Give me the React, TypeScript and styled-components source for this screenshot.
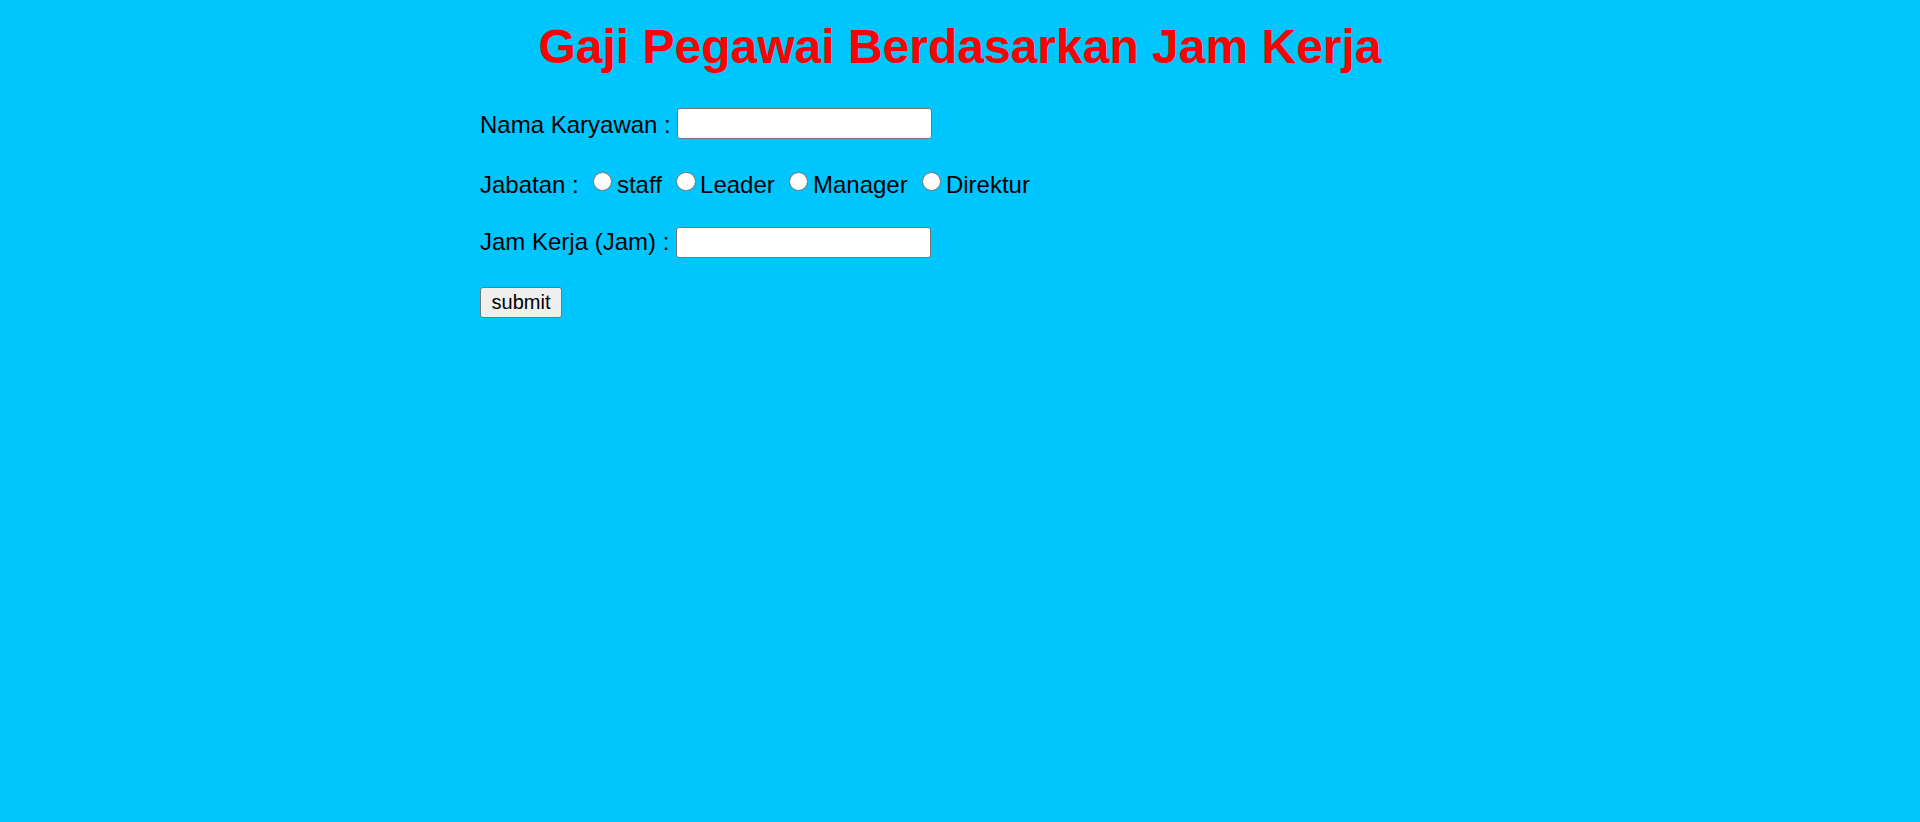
import React from "react";
import styled, { createGlobalStyle } from "styled-components";

const GlobalStyle = createGlobalStyle`
  html, body {
    margin: 0;
    padding: 0;
    background: #00c6ff;
  }
  body {
    font-family: "Liberation Sans", Arial, sans-serif;
    color: #000;
    min-height: 822px;
  }
`;

const Page = styled.div`
  min-height: 822px;
  background: #00c6ff;
  padding-top: 19px;
  box-sizing: border-box;
`;

const Title = styled.h1`
  margin: 0;
  font-family: "Liberation Sans", Arial, sans-serif;
  font-size: 48px;
  font-weight: bold;
  line-height: 55px;
  text-align: center;
  color: #ff0000;
`;

const Form = styled.form`
  width: 960px;
  margin: 0 auto;
  padding-top: 34px;
  display: flex;
  flex-direction: column;
  font-size: 24px;
`;

const Row = styled.div<{ $space: number }>`
  display: flex;
  align-items: flex-start;
  gap: 6.7px;
  margin-top: ${(p) => p.$space}px;
`;

const Label = styled.span<{ $offset?: number }>`
  line-height: normal;
  white-space: pre;
  margin-top: ${(p) => p.$offset ?? 0}px;
`;

const TextInput = styled.input`
  box-sizing: border-box;
  width: 255px;
  height: 31px;
  margin: 0;
  padding: 1.5px 3px;
  border: 1.5px solid #767676;
  border-radius: 3px;
  background: #fff;
  font-family: "Liberation Sans", Arial, sans-serif;
  font-size: 20px;
  outline: none;
`;

const Option = styled.label`
  display: flex;
  align-items: flex-start;
  line-height: normal;
`;

const Radio = styled.input`
  appearance: none;
  -webkit-appearance: none;
  box-sizing: border-box;
  width: 19.5px;
  height: 19.5px;
  margin: 1px 4.5px 0 7.5px;
  border: 1.5px solid #767676;
  border-radius: 50%;
  background: #fff;
  flex: none;
`;

const SubmitButton = styled.button`
  align-self: flex-start;
  box-sizing: border-box;
  width: 82px;
  height: 31px;
  margin: 29px 0 0;
  padding: 0 9px;
  border: 1.5px solid #767676;
  border-radius: 3px;
  background: #efefef;
  color: #000;
  font-family: "Liberation Sans", Arial, sans-serif;
  font-size: 20px;
  line-height: 1;
`;

const jabatan = ["staff", "Leader", "Manager", "Direktur"];

export default function App() {
  return (
    <>
      <GlobalStyle />
      <Page>
        <Title>Gaji Pegawai Berdasarkan Jam Kerja</Title>
        <Form onSubmit={(e) => e.preventDefault()}>
          <Row $space={0}>
            <Label $offset={2.5}>Nama Karyawan :</Label>
            <TextInput type="text" name="nama" />
          </Row>
          <Row $space={31.5}>
            <Label>Jabatan :</Label>
            {jabatan.map((j) => (
              <Option key={j}>
                <Radio type="radio" name="jabatan" value={j} />
                <span>{j}</span>
              </Option>
            ))}
          </Row>
          <Row $space={28}>
            <Label $offset={1.5}>Jam Kerja (Jam) :</Label>
            <TextInput type="text" name="jam" />
          </Row>
          <SubmitButton type="submit">submit</SubmitButton>
        </Form>
      </Page>
    </>
  );
}
